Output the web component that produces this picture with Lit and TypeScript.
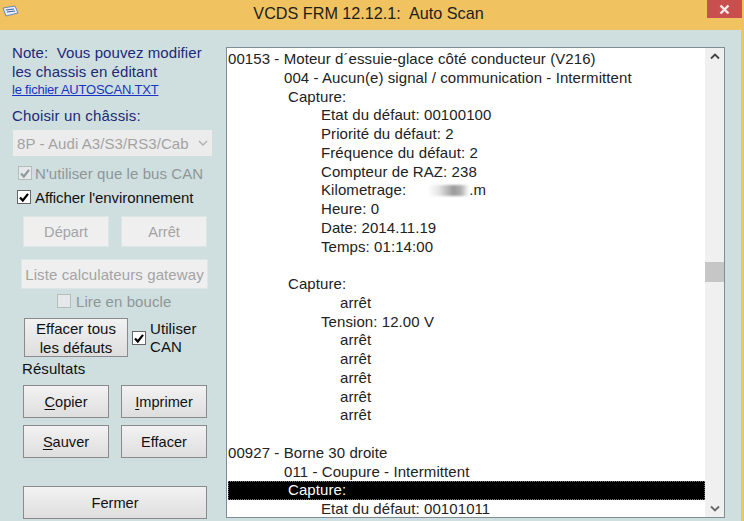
import { LitElement, html, css } from "lit";
import { customElement } from "lit/decorators.js";

type Line = [number, string, string?];
const LINES: Line[] = [
  [0, "00153 - Moteur d´essuie-glace côté conducteur (V216)"],
  [56, "004 - Aucun(e) signal / communication - Intermittent"],
  [60, "Capture:"],
  [93, "Etat du défaut: 00100100"],
  [93, "Priorité du défaut: 2"],
  [93, "Fréquence du défaut: 2"],
  [93, "Compteur de RAZ: 238"],
  [93, "Kilometrage:", "km"],
  [93, "Heure: 0"],
  [93, "Date: 2014.11.19"],
  [93, "Temps: 01:14:00"],
  [0, ""],
  [60, "Capture:"],
  [112, "arrêt"],
  [93, "Tension: 12.00 V"],
  [112, "arrêt"],
  [112, "arrêt"],
  [112, "arrêt"],
  [112, "arrêt"],
  [112, "arrêt"],
  [0, ""],
  [0, "00927 - Borne 30 droite"],
  [56, "011 - Coupure - Intermittent"],
  [60, "Capture:", "sel"],
  [93, "Etat du défaut: 00101011"],
];

const check = (disabled = false) => html`<span class="cb ${disabled ? "off" : ""}"><svg viewBox="0 0 14 14" width="14" height="14"><path d="M3 7.5 L5.8 10.5 L11 3.8" fill="none" stroke="${disabled ? "#8f9a9a" : "#000"}" stroke-width="2.2"/></svg></span>`;

@customElement("app-root")
export class AppRoot extends LitElement {
  static styles = css`
    :host { display: flex; flex-direction: column; width: 744px; height: 521px; overflow: hidden; background: #efc463; font-family: "Liberation Sans", Arial, sans-serif; font-size: 15px; letter-spacing: 0.08px; color: #111; }
    .title { height: 30px; flex: none; display: flex; align-items: center; position: relative; background: #f0c260; }
    .title .t { position: absolute; left: 0; right: 7px; top: 0; height: 27px; line-height: 27px; text-align: center; font-size: 16.2px; letter-spacing: 0; color: #1d1d1d; }
    .appicon { margin: 0 0 0 1px; position: relative; top: -4px; }
    .close { position: absolute; right: 2px; top: 0; width: 35px; height: 18px; background: #c94f4f; display: flex; align-items: center; justify-content: center; }
    .client { flex: 1; display: flex; margin: 0 3px 0 0; background: #cfdfe0; box-shadow: 0 -1px 0 #dcc98f; }
    .left { width: 226px; flex: none; display: flex; flex-direction: column; align-items: flex-start; padding: 13px 0 0 12px; box-sizing: border-box; line-height: 19px; }
    .note { color: #1c2a78; height: 38px; white-space: nowrap; }
    .link { color: #1a33c0; text-decoration: underline; font-size: 13px; letter-spacing: -0.22px; height: 18px; line-height: 18px; }
    .choose { color: #1c2a78; margin-top: 7px; height: 19px; letter-spacing: 0.15px; }
    .select { margin: 5px 0 0 1px; width: 199px; height: 26px; box-sizing: border-box; background: #ececec; color: #a3a3a3; display: flex; align-items: center; justify-content: space-between; padding: 0 4px 0 4px; white-space: nowrap; }
    .row { display: flex; align-items: center; white-space: nowrap; }
    .cb { width: 14px; height: 14px; box-sizing: border-box; border: 1px solid #666; background: #fff; display: inline-flex; flex: none; overflow: visible; }
    .cb svg { margin: -1px; flex: none; }
    .cb.off { background: #e4e8e8; border-color: #b5bcbc; }
    .gray { color: #8e9696; }
    .can { margin: 9px 0 0 6px; gap: 3px; height: 16px; }
    .env { margin: 8px 0 0 5px; gap: 4px; height: 16px; letter-spacing: -0.08px; }
    .btn { box-sizing: border-box; border: 1px solid #8a8a8a; background: linear-gradient(#f2f2f2, #dedede); display: flex; align-items: center; justify-content: center; text-align: center; color: #111; flex: none; line-height: 19px; font-size: 14.6px; letter-spacing: 0; padding-top: 2px; }
    .btn.off { border-color: #dde6e6; background: #efefef; color: #a4a4a4; }
    .pair { display: flex; gap: 12px; margin-left: 11px; }
    .p1 { margin-top: 11px; }
    .w { width: 86px; height: 31px; }
    .gate { width: 187px; height: 30px; margin: 12px 0 0 9px; white-space: nowrap; font-size: 15px; letter-spacing: 0.1px; padding-top: 0; }
    .loop { margin: 5px 0 0 45px; gap: 5px; height: 14px; }
    .eff { display: flex; align-items: flex-start; margin: 10px 0 0 12px; }
    .effb { width: 104px; height: 39px; font-size: 15px; padding-top: 0; }
    .eff .cb { margin: 13px 0 0 4px; }
    .eff .lbl { margin: 2px 0 0 4px; line-height: 18px; }
    .res { margin: 2px 0 0 10px; height: 19px; }
    .act { display: flex; flex-direction: column; gap: 7px; margin: 7px 0 0 11px; }
    .act .r { display: flex; gap: 12px; }
    .a { width: 86px; height: 33px; }
    u { text-decoration-thickness: 1px; text-underline-offset: 2px; }
    .close-b { width: 184px; height: 33px; margin: 28px 0 0 11px; }
    .list { flex: none; width: 499px; height: 471px; margin: 17px 0 3px 0; box-sizing: border-box; border: 1px solid #7d8f95; background: #fff; display: flex; overflow: hidden; }
    .lines { flex: 1; min-width: 0; padding: 2px 0 0 1px; overflow: hidden; }
    .ln { height: 18.75px; line-height: 18.75px; white-space: nowrap; color: #222; }
    .ln.sel { background: #000; color: #fff; outline: 1px dotted #777; outline-offset: -1px; }
    .blur { display: inline-block; width: 55px; height: 11px; vertical-align: -1px; background: linear-gradient(90deg, #fff 0 25%, #e6e6e6 45%, #9a9a9a 72%, #b0b0b0 85%, #fff); filter: blur(1px); margin-left: 8px; }
    .sb { width: 19px; flex: none; background: #f0f0f0; display: flex; flex-direction: column; align-items: center; }
    .arrow { height: 17px; flex: none; display: flex; align-items: center; justify-content: center; }
    .track { flex: 1; width: 100%; padding-top: 197px; box-sizing: border-box; }
    .thumb { width: 100%; height: 20px; background: #c6c6c6; }
  `;

  render() {
    return html`
      <div class="title">
        <svg class="appicon" width="18" height="12" viewBox="0 0 18 12"><path d="M2 3 L14 1 L17 8 L5 11 Z" fill="#e8eef8" stroke="#6c86b8" stroke-width="1"/><path d="M5 5 L13 4 M6 7 L14 6" stroke="#3d5fa5" stroke-width="1"/></svg>
        <div class="t">VCDS FRM 12.12.1:&nbsp; Auto Scan</div>
        <div class="close"><svg width="11" height="11" viewBox="0 0 11 11"><path d="M1.5 1.5 L9.5 9.5 M9.5 1.5 L1.5 9.5" stroke="#fbeaea" stroke-width="2.4"/></svg></div>
      </div>
      <div class="client">
        <div class="left">
          <div class="note">Note:&nbsp; Vous pouvez modifier<br />les chassis en éditant</div>
          <div class="link">le fichier AUTOSCAN.TXT</div>
          <div class="choose">Choisir un châssis:</div>
          <div class="select"><span>8P - Audi A3/S3/RS3/Cab</span><svg width="10" height="6" viewBox="0 0 10 6"><path d="M1 1 L5 5 L9 1" fill="none" stroke="#b0b0b0" stroke-width="1.4"/></svg></div>
          <div class="row can">${check(true)}<span class="gray">N'utiliser que le bus CAN</span></div>
          <div class="row env">${check()}<span>Afficher l'environnement</span></div>
          <div class="pair p1"><div class="btn off w">Départ</div><div class="btn off w">Arrêt</div></div>
          <div class="btn off gate">Liste calculateurs gateway</div>
          <div class="row loop"><span class="cb off"></span><span class="gray">Lire en boucle</span></div>
          <div class="eff">
            <div class="btn effb">Effacer tous<br />les défauts</div>
            ${check()}
            <div class="lbl">Utiliser<br />CAN</div>
          </div>
          <div class="res">Résultats</div>
          <div class="act">
            <div class="r"><div class="btn a"><span><u>C</u>opier</span></div><div class="btn a"><span><u>I</u>mprimer</span></div></div>
            <div class="r"><div class="btn a"><span><u>S</u>auver</span></div><div class="btn a">Effacer</div></div>
          </div>
          <div class="btn close-b">Fermer</div>
        </div>
        <div class="list">
          <div class="lines">
            ${LINES.map(([x, t, e]) => {
              const sel = e === "sel";
              return html`<div class="ln ${sel ? "sel" : ""}" style="padding-left:${x}px">${t}${e === "km" ? html`<span class="blur"></span>.m` : ""}</div>`;
            })}
          </div>
          <div class="sb">
            <div class="arrow"><svg width="10" height="7" viewBox="0 0 10 7"><path d="M1 5.5 L5 1.5 L9 5.5" fill="none" stroke="#444" stroke-width="1.8"/></svg></div>
            <div class="track"><div class="thumb"></div></div>
            <div class="arrow"><svg width="10" height="7" viewBox="0 0 10 7"><path d="M1 1.5 L5 5.5 L9 1.5" fill="none" stroke="#666" stroke-width="1.8"/></svg></div>
          </div>
        </div>
      </div>
    `;
  }
}
